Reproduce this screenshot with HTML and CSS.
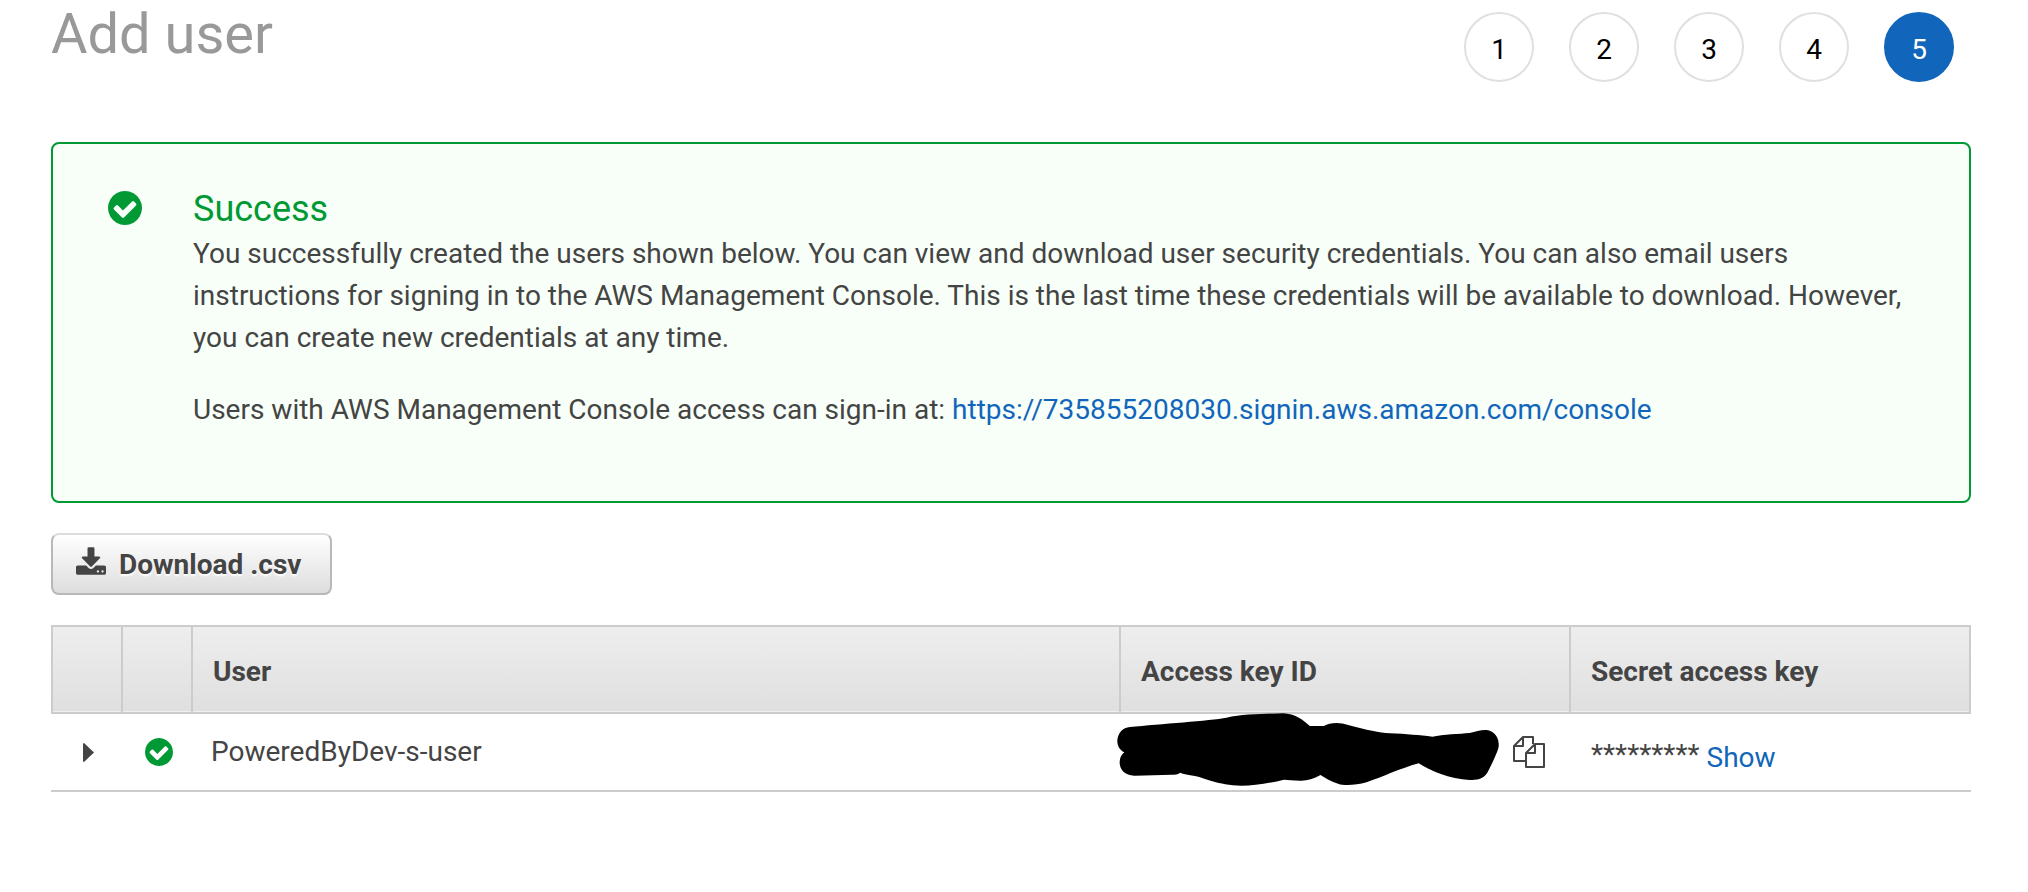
FILE: index.html
```html
<!DOCTYPE html>
<html lang="en">
<head>
<meta charset="utf-8">
<title>Add user</title>
<link rel="stylesheet" href="styles.css">
</head>
<body>
<svg class="sprite" aria-hidden="true">
  <symbol id="check" viewBox="0 128 1536 1536">
    <path d="M1284 734q0-28-18-46l-91-90q-19-19-45-19t-45 19l-408 407-226-226q-19-19-45-19t-45 19l-91 90q-18 18-18 46 0 27 18 45l362 362q19 19 45 19 27 0 46-19l543-543q18-18 18-45zM1536 896q0 209-103 385.500t-279.500 279.500-385.500 103-385.500-103-279.500-279.500-103-385.500 103-385.500 279.500-279.500 385.500-103 385.500 103 279.500 279.500 103 385.500z"/>
  </symbol>
</svg>
<main class="page">
  <header class="header">
    <h1 class="title">Add user</h1>
    <ol class="steps">
      <li class="step">1</li>
      <li class="step">2</li>
      <li class="step">3</li>
      <li class="step">4</li>
      <li class="step step-current" aria-current="step">5</li>
    </ol>
  </header>

  <section class="alert">
    <svg class="alert-icon" aria-hidden="true"><use href="#check"/></svg>
    <div class="alert-body">
      <h2 class="alert-title">Success</h2>
      <p class="alert-text">You successfully created the users shown below. You can view and download user security credentials. You can also email users instructions for signing in to the AWS Management Console. This is the last time these credentials will be available to download. However, you can create new credentials at any time.</p>
      <p class="alert-text">Users with AWS Management Console access can sign-in at: <a class="link" href="https://735855208030.signin.aws.amazon.com/console">https://735855208030.signin.aws.amazon.com/console</a></p>
    </div>
  </section>

  <button class="download" type="button">
    <svg class="download-icon" viewBox="0 0 1664 1536" aria-hidden="true"><path d="M1280 1344q0-26-19-45t-45-19-45 19-19 45 19 45 45 19 45-19 19-45zm256 0q0-26-19-45t-45-19-45 19-19 45 19 45 45 19 45-19 19-45zm128-224v320q0 40-28 68t-68 28h-1472q-40 0-68-28t-28-68v-320q0-40 28-68t68-28h465l135 136q58 56 136 56t136-56l136-136h464q40 0 68 28t28 68zm-325-569q17 41-14 70l-448 448q-18 19-45 19t-45-19l-448-448q-31-29-14-70 17-39 59-39h256v-448q0-26 19-45t45-19h256q26 0 45 19t19 45v448h256q42 0 59 39z"/></svg>
    Download .csv
  </button>

  <table class="users">
    <colgroup>
      <col class="col-expand">
      <col class="col-status">
      <col>
      <col class="col-key">
      <col class="col-secret">
    </colgroup>
    <thead>
      <tr>
        <th></th>
        <th></th>
        <th scope="col">User</th>
        <th scope="col">Access key ID</th>
        <th scope="col">Secret access key</th>
      </tr>
    </thead>
    <tbody>
      <tr>
        <td class="cell-icon">
          <button class="icon-button expand" type="button" aria-label="Expand row">
            <svg class="caret" viewBox="0 0 11 19" aria-hidden="true"><path d="M0 1Q0 0 1 0L11 9.500L1 19Q0 19 0 18z"/></svg>
          </button>
        </td>
        <td class="cell-icon"><svg class="status-icon" role="img" aria-label="Success"><use href="#check"/></svg></td>
        <td class="cell-user">PoweredByDev-s-user</td>
        <td class="cell-key">
          <svg class="redaction" viewBox="51 279 1147 219" role="img" aria-label="Hidden access key"><path d="M90 321C180 312 330 302 380 293C430 282 500 281 550 280C585 281 610 300 630 318L672 318C690 307 720 306 745 315C800 330 840 338 870 340C920 342 960 346 998 350C1030 343 1080 342 1110 339C1130 334 1150 328 1165 331C1190 336 1201 362 1196 385C1190 405 1175 435 1163 458C1150 478 1130 480 1110 480C1050 478 990 452 957 430C900 446 850 470 800 487C770 495 735 499 715 491C695 485 675 474 662 465C640 478 620 483 600 482C580 481 565 480 552 479C500 492 460 497 425 497C350 495 320 475 285 468C265 464 250 462 241 458C232 464 225 464 215 464L105 467C75 468 58 448 59 425C60 412 65 403 73 397C58 390 51 375 52 360C54 340 68 322 90 321Z"/></svg>
          <button class="icon-button copy" type="button" aria-label="Copy access key">
            <svg class="copy-icon" viewBox="0 0 32 32" aria-hidden="true"><path d="M12 25H1V10L10 1H20V8M10 1V10H1M13 17L22 8H31V31H13ZM22 8V17H13"/></svg>
          </button>
        </td>
        <td><div class="secret"><span class="secret-mask">*********</span><a class="link" href="#show">Show</a></div></td>
      </tr>
    </tbody>
  </table>
</main>
</body>
</html>
```
FILE: styles.css
```css
* {
  box-sizing: border-box;
}

body {
  margin: 0;
  background: #fff;
  color: #444;
  font: 28px/42px Roboto, "Liberation Sans", sans-serif;
}

.sprite {
  display: none;
}

.page {
  padding: 0 57px 0 51px;
}

.header {
  display: flex;
  justify-content: space-between;
  align-items: flex-start;
  padding-bottom: 60px;
}

.title {
  margin: 0;
  color: #999;
  font-size: 56px;
  font-weight: 400;
  line-height: 68px;
}

.steps {
  display: flex;
  gap: 35px;
  margin: 0;
  padding: 12px 17px 0 0;
  list-style: none;
}

.step {
  display: flex;
  align-items: center;
  justify-content: center;
  width: 70px;
  height: 70px;
  padding-top: 6px;
  border: 2px solid #e0e0e0;
  border-radius: 50%;
  color: #000;
}

.step-current {
  border-color: #1166bb;
  background: #1166bb;
  color: #fff;
}

.link {
  color: #1166bb;
  text-decoration: none;
}

.alert {
  display: flex;
  gap: 51px;
  padding: 42px 55px 40px;
  border: 2px solid #009933;
  border-radius: 8px;
  background: #f7fff8;
}

.alert-icon {
  flex: none;
  width: 34px;
  height: 34px;
  margin-top: 5px;
  fill: #009933;
}

.alert-title {
  margin: 0 0 1px;
  color: #009933;
  font-size: 36px;
  font-weight: 400;
  line-height: 46px;
}

.alert-text {
  margin: 0 0 30px;
}

.download {
  display: flex;
  align-items: center;
  gap: 13px;
  margin: 30px 0;
  padding: 9px 29px 7px 23px;
  border: 2px solid #b8b8b8;
  border-top-color: #ddd;
  border-radius: 8px;
  background: linear-gradient(#fff, #ddd);
  color: #444;
  font: inherit;
  font-weight: 700;
  text-shadow: 0 2px 2px #fff;
}

.download-icon {
  width: 30px;
  height: 28px;
  margin-bottom: 8px;
  fill: #444;
}

.users {
  width: 100%;
  table-layout: fixed;
  border-collapse: separate;
  border-spacing: 0;
}

.col-expand {
  width: 72px;
}

.col-status {
  width: 70px;
}

.col-key {
  width: 450px;
}

.col-secret {
  width: 400px;
}

.users th {
  height: 89px;
  padding: 24px 20px 19px;
  border: solid #ccc;
  border-width: 2px 2px 2px 0;
  background: linear-gradient(#eee, #dfdfdf);
  box-shadow: inset 0 -1px #f0f0f0;
  font-weight: 700;
  text-align: left;
}

.users th:first-child {
  border-left-width: 2px;
}

.users td {
  height: 78px;
  padding: 0 20px;
  border-bottom: 2px solid #ccc;
}

.users .cell-icon {
  padding: 0 0 0 2px;
}

.users .cell-user {
  padding-left: 18px;
}

.users .cell-key {
  position: relative;
  padding-right: 26px;
}

.icon-button {
  display: block;
  padding: 0;
  border: 0;
  background: none;
}

.expand {
  margin: 0 auto;
}

.copy {
  margin-left: auto;
}

.caret,
.copy-icon,
.status-icon {
  display: block;
}

.caret {
  width: 11px;
  height: 19px;
  fill: #444;
}

.status-icon {
  width: 28px;
  height: 28px;
  margin: 0 auto;
  fill: #009933;
}

.redaction {
  position: absolute;
  top: -1px;
  left: -4px;
  width: 382px;
  height: 73px;
}

.copy-icon {
  width: 32px;
  height: 32px;
  fill: none;
  stroke: #444;
  stroke-width: 2;
  stroke-linejoin: round;
}

.secret {
  display: flex;
  gap: 7px;
  padding-top: 12px;
}

.secret-mask {
  line-height: 36px;
}
```
